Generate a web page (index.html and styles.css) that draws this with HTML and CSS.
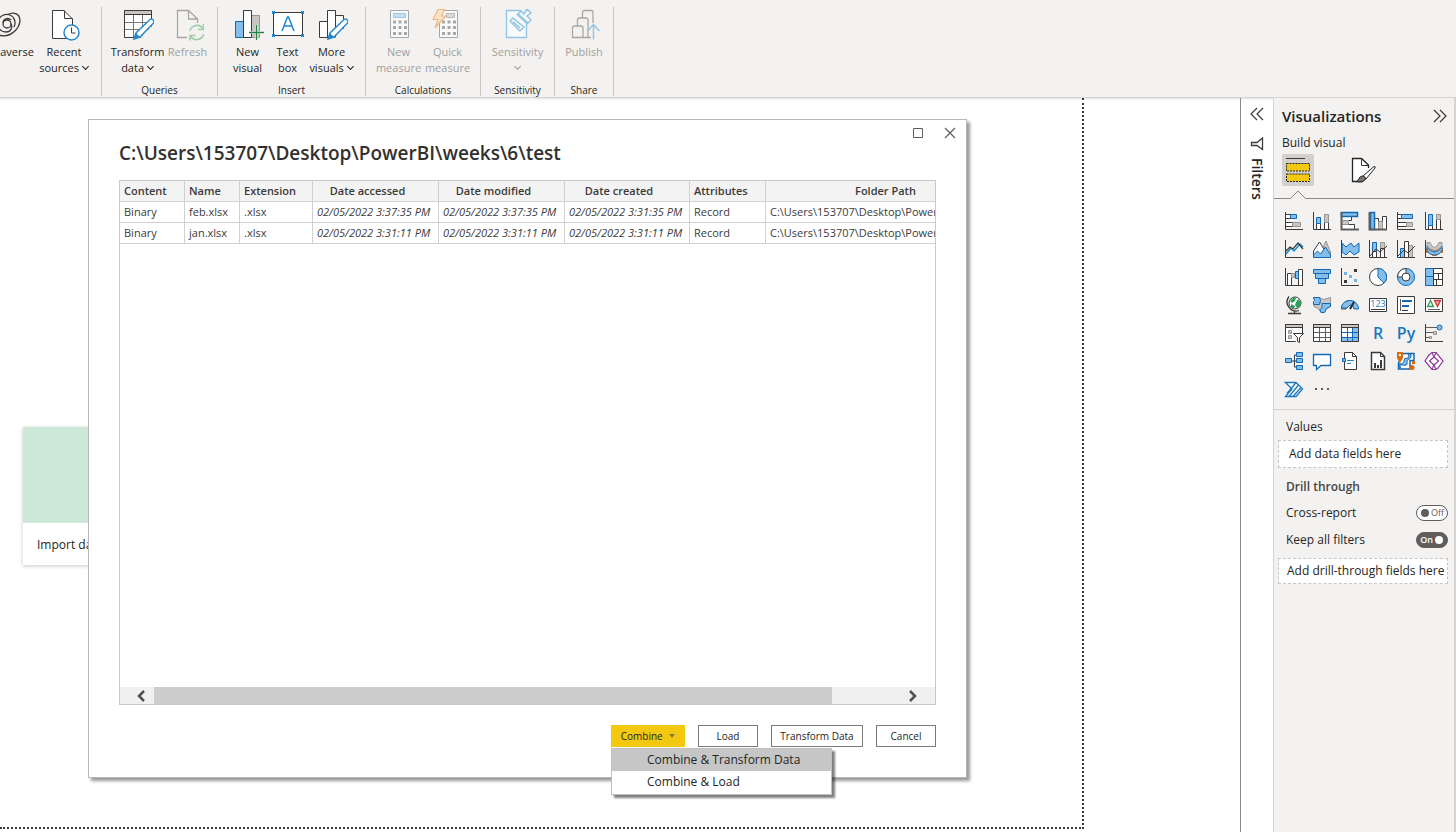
FILE: index.html
```html
<!DOCTYPE html>
<html lang="en">
<head>
<meta charset="utf-8">
<title>Power BI Desktop</title>
<link rel="stylesheet" href="styles.css">
</head>
<body>
<header class="ribbon">
  <section class="group group-data">
    <div class="tools">
      <button class="tool tool-wide"><svg width="32" height="32" viewBox="0 0 32 32"><g fill="none" stroke="#3b3a39" stroke-width="1.300"><circle cx="15" cy="15" r="4"/><path d="M19 15c2 3 0 8-5 8-6 0-9-5-8-10 1-6 7-9 12-7 5 2 6 8 4 12"/><path d="M16 5.500c3-2 8-2 10.500 1 3 4 1 11-3 15-4 4-10 6-15 5-5-2-6-9-3-14"/><path d="M11 14c0-4 5-6 8-3"/></g></svg><span>Dataverse</span></button>
      <button class="tool tool-wide"><svg width="32" height="32" viewBox="0 0 32 32"><path class="w" d="M4.500 1.500H16L24.500 10V29.500H4.500Z"/><path class="k" d="M16.500 1.500V9.500H24.500"/><circle cx="23.500" cy="23.500" r="7.500" fill="#fff" stroke="#2b88c8" stroke-width="1.500"/><path class="k" d="M23.500 18.500V24H27.500"/></svg><span>Recent<br>sources <i class="chev"></i></span></button>
    </div>
  </section>
  <section class="group group-queries">
    <div class="tools">
      <button class="tool tool-wide"><svg width="32" height="32" viewBox="0 0 32 32"><path class="w" d="M2.500 1.500H29.500V28.500H2.500Z"/><path fill="#c8c6c4" stroke="#3b3a39" d="M2.500 1.500H29.500V5.500H2.500Z"/><path fill="none" stroke="#797775" d="M3 13.500H29M3 20.500H29M11.500 6V28M20.500 6V28"/><path d="M18 29.500L30 17V29.500Z" fill="#f3f2f1"/><path d="M12 30l2-6L28 10.500c2-1.500 5 1 3.500 3.500L18 28Z" fill="#fff" stroke="#2b88c8" stroke-width="1.500"/><path d="M12 30l2-6 4 4Z" fill="#2b88c8"/></svg><span>Transform<br>data <i class="chev"></i></span></button>
      <button class="tool tool-mid" disabled><svg width="32" height="32" viewBox="0 0 32 32"><path fill="none" stroke="#a9a7a5" stroke-width="1.300" d="M15 28.500H5.500V1.500H16.500L25.500 10V14M16.500 1.500V10H25.500"/><path fill="none" stroke="#a0cda9" stroke-width="1.600" d="M18 22a7 7 0 0 1 13-2M31.500 15v5.500H26M31.500 25a7 7 0 0 1-13 2M18 31.500V26.500H23.500"/></svg><span>Refresh</span></button>
    </div>
    <h2>Queries</h2>
  </section>
  <section class="group group-insert">
    <div class="tools">
      <button class="tool tool-small"><svg width="32" height="32" viewBox="0 0 32 32"><path fill="#83beec" stroke="#1268b3" d="M3.500 12.500H11.500V28.500H3.500Z"/><path fill="#c8c6c4" stroke="#979593" d="M19.500 6.500H27.500V28.500H19.500Z"/><path class="w" d="M11.500 1.500H19.500V28.500H11.500Z"/><path d="M24.500 16V31M17 23.500H32" stroke="#fff" stroke-width="3" opacity=".6"/><path d="M24.500 16V31M17 23.500H32" stroke="#1f8546" stroke-width="1.300"/></svg><span>New<br>visual</span></button>
      <button class="tool tool-mid"><svg width="32" height="32" viewBox="0 0 32 32"><path class="w" d="M1.500 3.500H30.500V26.500H1.500Z"/><path fill="#1b88d3" d="M0 2h3v3H0zM29 2h3v3H29zM0 25h3v3H0zM29 25h3v3H29z"/><path d="M10 22L15.500 8H16.500L22 22M12 17H20" fill="none" stroke="#1b88d3" stroke-width="1.500"/></svg><span>Text<br>box</span></button>
      <button class="tool tool-mid"><svg width="32" height="32" viewBox="0 0 32 32"><path class="w" d="M3.500 12.500H11.500V28.500H3.500ZM19.500 6.500H27.500V28.500H19.500ZM11.500 1.500H19.500V28.500H11.500Z"/><path d="M18 30L30 17V30Z" fill="#f3f2f1"/><path d="M12 30l2-6L28 10.500c2-1.500 5 1 3.500 3.500L18 28Z" fill="#fff" stroke="#2b88c8" stroke-width="1.500"/><path d="M12 30l2-6 4 4Z" fill="#2b88c8"/></svg><span>More<br>visuals <i class="chev"></i></span></button>
    </div>
    <h2>Insert</h2>
  </section>
  <section class="group group-calc">
    <div class="tools">
      <button class="tool tool-mid tool-calc" disabled><svg width="32" height="32" viewBox="0 0 32 32"><path fill="#fafafa" stroke="#a9a7a5" d="M7.500 1.500H25.500V28.500H7.500Z"/><path fill="#c4dff2" stroke="#9cc6e4" d="M10.500 4.500H22.500V8.500H10.500Z"/><path fill="none" stroke="#a9a7a5" stroke-width="3" stroke-dasharray="3 2.500" d="M10 13H24M10 18.500H24M10 24.500H24"/></svg><span>New<br>measure</span></button>
      <button class="tool tool-mid tool-calc" disabled><svg width="32" height="32" viewBox="0 0 32 32"><path fill="#fafafa" stroke="#a9a7a5" d="M7.500 1.500H25.500V28.500H7.500Z"/><path fill="#ddd" stroke="#b9b7b5" d="M14.500 4.500H22.500V8.500H14.500Z"/><path fill="none" stroke="#a9a7a5" stroke-width="3" stroke-dasharray="3 2.500" d="M10 13H24M10 18.500H24M10 24.500H24"/><path fill="#fbe3c3" stroke="#eeb981" stroke-width="1.200" d="M6 .5H12.500L9.500 7H13.500L3 19 6 10.500H1Z"/></svg><span>Quick<br>measure</span></button>
    </div>
    <h2>Calculations</h2>
  </section>
  <section class="group group-sens">
    <div class="tools">
      <button class="tool tool-wide" disabled><svg width="32" height="32" viewBox="0 0 32 32"><path fill="#f8fafc" stroke="#92c5e4" stroke-width="1.300" d="M19 1.500H4.500V28.500H24.500V14"/><path fill="#f3f8fc" stroke="#92c5e4" stroke-width="1.500" d="M8 12l3-3 11 9-4 4ZM11 12.500l7 6.500M16 5l3-3 3 3 3-5 4 4-4 3 4 4-3 3Z"/><path stroke="#92c5e4" stroke-width="2" d="M15 5l11 10"/></svg><span>Sensitivity<br><i class="chev"></i></span></button>
    </div>
    <h2>Sensitivity</h2>
  </section>
  <section class="group group-share">
    <div class="tools">
      <button class="tool tool-mid" disabled><svg width="32" height="32" viewBox="0 0 32 32"><g fill="none" stroke="#a9a7a5" stroke-width="1.300"><path d="M4.500 28.500V19q0-2 2-2H13q2 0 2 2V28.500Z"/><path d="M9.500 17V11q0-2 2-2H18q2 0 2 2V28.500H15"/><path d="M14.500 9V3.500q0-2 2-2H23q2 0 2 2V14M20 28.500H23"/></g><path d="M25.500 30.500V16M19.500 22l6-6.500 6 6.500" fill="none" stroke="#92c5e4" stroke-width="1.500"/></svg><span>Publish</span></button>
    </div>
    <h2>Share</h2>
  </section>
</header>

<main class="workspace">
  <div class="canvas">
    <div class="page">
      <a class="card" href="#import"><span class="card-art"></span><span class="card-text">Import data from Excel</span></a>
    </div>
  </div>

  <aside class="filters">
    <button class="plain" aria-label="Expand filters"><svg width="16" height="16" viewBox="0 0 16 16"><path class="k" stroke-width="1.200" d="M8 2L2 8l6 6M14 2L8 8l6 6"/></svg></button>
    <svg width="14" height="14" viewBox="0 0 14 14"><path class="k" stroke-width="1.300" d="M12.500 1V12.500L7 8.500H1.500V5.500H7Z"/></svg>
    <h2>Filters</h2>
  </aside>

  <aside class="viz">
    <div class="viz-head"><h2>Visualizations</h2><button class="plain" aria-label="Collapse"><svg width="16" height="16" viewBox="0 0 16 16"><path class="k" stroke-width="1.200" d="M2 2l6 6-6 6M8 2l6 6-6 6"/></svg></button></div>
    <h3>Build visual</h3>
    <div class="modes">
      <button class="mode mode-on" aria-label="Build visual"><svg width="32" height="32" viewBox="0 0 32 32"><path class="k" d="M4 4.500H23"/><path fill="#f2c811" stroke="#252423" stroke-dasharray="2 1" d="M4.500 9.500H27.500V17H4.500ZM4.500 20H27.500V27.500H4.500Z"/></svg></button>
      <button class="mode" aria-label="Format visual"><svg width="32" height="32" viewBox="0 0 32 32"><path d="M16 27.500H5.500V4.500H14.500L21.500 11V14" fill="#fff" stroke="#252423" stroke-width="1.300"/><path class="k" d="M14.500 4.500V11.500H21.500"/><path fill="#fff" stroke="#252423" d="M16 22L27 12.500q2 0 1 1.500L19 25Z"/><path fill="#797775" stroke="#252423" d="M9 27.500c3 0 2-5 6.500-5.500 3 0 4 3 2 4.500-3 2-6 1.500-8.500 1Z"/></svg></button>
    </div>
    <svg class="notch" width="20" height="9" viewBox="0 0 20 9"><path d="M0 9V8.500H2.500L10 1l7.500 7.500H20V9Z" fill="#f3f2f1"/><path d="M0 8.500H2.500L10 1l7.500 7.500H20" fill="none" stroke="#8a8886"/></svg>

    <div class="gallery">
      <button aria-label="Stacked bar chart"><svg viewBox="0 0 20 20"><path class="w" d="M1.500 3.500h6v4h-6zM1.500 11.500h8v4h-8z"/><path class="b" d="M6.500 3.500h6v4h-6z"/><path class="g" d="M8.500 11.500h8v4h-8z"/><path class="k" d="M1.500 1V18.500H19"/></svg></button>
      <button aria-label="Stacked column chart"><svg viewBox="0 0 20 20"><path class="w" d="M4.500 12.500h4v6h-4zM12.500 11.500h4v7h-4z"/><path class="b" d="M4.500 6.500h4v6h-4z"/><path class="g" d="M12.500 3.500h4v8h-4z"/><path class="k" d="M1.500 1V18.500H19"/></svg></button>
      <button aria-label="Clustered bar chart"><svg viewBox="0 0 20 20"><path class="w" d="M1.500 5.500h10v4h-10zM1.500 13.500h13v5h-13z"/><path class="g" d="M1.500 9.500h7v4h-7z"/><path class="b" stroke-width="1.500" d="M1.500 1.500h16v4h-16z"/><path fill="none" stroke="#605e5c" stroke-width="2" d="M1.500 1V18.500H19"/></svg></button>
      <button aria-label="Clustered column chart"><svg viewBox="0 0 20 20"><path class="w" d="M6.500 7.500h4v11h-4zM14.500 5.500h4v13h-4z"/><path class="g" d="M10.500 10.500h4v8h-4z"/><path class="b" stroke-width="1.500" d="M2.500 1.500h4v17h-4z"/><path fill="none" stroke="#605e5c" stroke-width="2" d="M1.500 1V18.500H19"/></svg></button>
      <button aria-label="100% stacked bar chart"><svg viewBox="0 0 20 20"><path class="w" d="M1.500 3.500h4v4h-4zM1.500 11.500h9v4h-9z"/><path class="b" d="M5.500 3.500h11v4h-11z"/><path class="g" d="M10.500 11.500h6v4h-6z"/><path class="k" d="M1.500 1V18.500H19"/></svg></button>
      <button aria-label="100% stacked column chart"><svg viewBox="0 0 20 20"><path class="w" d="M4.500 14.500h4v4h-4zM12.500 8.500h4v10h-4z"/><path class="b" d="M4.500 3.500h4v11h-4z"/><path class="g" d="M12.500 3.500h4v5h-4z"/><path class="k" d="M1.500 1V18.500H19"/></svg></button>

      <button aria-label="Line chart"><svg viewBox="0 0 20 20"><path d="M2 15l5-6 3 3 6-7 3 3" fill="none" stroke="#1b88d3" stroke-width="1.500"/><path class="k" stroke-width="1.300" d="M2 12l4-4 3 2 5-6 5 6"/><path class="k" d="M1.500 1V18.500H19"/></svg></button>
      <button aria-label="Area chart"><svg viewBox="0 0 20 20"><path class="g" d="M9 13l5-11 4.500 11V18H9Z"/><path class="w" d="M1.500 12L7.500 3l5 8-4 7h-7Z"/><path class="b" d="M1.500 18.500V16l4-4 3 3 5-7 5 8V18.500Z"/></svg></button>
      <button aria-label="Stacked area chart"><svg viewBox="0 0 20 20"><path class="b" d="M2 4l4 4 5-4 3 4 5-4v9l-5 3-4-4-4 4-4-3Z"/><path class="k" d="M1.500 1V18.500H19"/></svg></button>
      <button aria-label="Line and stacked column chart"><svg viewBox="0 0 20 20"><path class="b" d="M4.500 3.500h4v9h-4z"/><path class="g" d="M12.500 3.500h4v6h-4z"/><path class="w" d="M4.500 12.500h4v6h-4zM12.500 9.500h4v9h-4z"/><path class="k" d="M1.500 1V18.500H19M2 17l6-7 4 3 7-6"/></svg></button>
      <button aria-label="Line and clustered column chart"><svg viewBox="0 0 20 20"><path class="b" d="M4.500 9.500h4v9h-4z"/><path class="g" d="M12.500 6.500h4v12h-4z"/><path class="w" d="M8.500 2.500h4v16h-4z"/><path class="k" d="M1.500 1V18.500H19M2 17l6-6 4 3 7-7"/></svg></button>
      <button aria-label="Ribbon chart"><svg viewBox="0 0 20 20"><path fill="#f0a04b" stroke="#d86b0f" d="M2.500 9.500h4l4 3 4-3h4v4h-3l-3 3h-4l-3-3h-3Z"/><path class="b" d="M3 7q3 6 7.500 6T18 7v4q-2 5-7.500 5T3 11Z"/><path class="g" d="M3 3.500h3q2 5 4.500 5t4.500-5h3v3q-3 5-7.500 5T3 6.500Z"/><path class="k" d="M1.500 1V18.500H19"/></svg></button>

      <button aria-label="Waterfall chart"><svg viewBox="0 0 20 20"><path class="w" d="M3.500 6.500h4v12h-4zM14.500 2.500h4v16h-4z"/><path class="g" d="M7.500 6.500h3v4h-3z"/><path class="b" d="M11.500 4.500h3v7h-3z"/><path class="k" d="M1.500 1V18.500H19"/></svg></button>
      <button aria-label="Funnel chart"><svg viewBox="0 0 20 20"><path class="b" d="M1.500 2.500h17v4h-17zM3.500 6.500h13v5h-13zM6.500 11.500h7v5h-7z"/></svg></button>
      <button aria-label="Scatter chart"><svg viewBox="0 0 20 20"><path class="k" d="M1.500 1V18.500H19"/><path fill="#3b3a39" d="M14 2h3v3h-3zM4 13h3v3H4z"/><path fill="#6fb3ea" d="M4 5h3v3H4zM9 8h3v3H9zM14 12h3v3h-3z"/></svg></button>
      <button aria-label="Pie chart"><svg viewBox="0 0 20 20"><circle class="w" cx="10" cy="10" r="8.500"/><path class="b" d="M10 1.500A8.500 8.500 0 0 1 16 16L10 10Z"/></svg></button>
      <button aria-label="Donut chart"><svg viewBox="0 0 20 20"><circle class="b" cx="10" cy="10" r="8.500"/><path class="w" d="M10 1.500A8.500 8.500 0 0 0 1.500 10H10Z"/><circle class="w" cx="10" cy="10" r="4"/></svg></button>
      <button aria-label="Treemap"><svg viewBox="0 0 20 20"><path class="w" d="M1.500 1.500h17v17h-17z"/><path class="b" d="M1.500 1.500h8v8h-8zM1.500 9.500h8v9h-8z"/><path class="k" d="M9.500 6.500h9M14.500 6.500v6M9.500 12.500h9M12.500 12.500v6M9.500 1.500v17"/></svg></button>

      <button aria-label="Map"><svg viewBox="0 0 20 20"><circle class="w" cx="11" cy="8" r="6"/><path fill="#2e9e5b" d="M6 6l4-4 2 1-1 3-3 2zM14 4l3 3-1 5-3 1-2-3 1-3zM7 9l4 2-1 3-3-2z"/><path class="k" stroke-width="1.300" d="M5 1.500a9 9 0 0 0 10 14M10.500 16.500v2M4 18.500h13"/></svg></button>
      <button aria-label="Filled map"><svg viewBox="0 0 20 20"><path class="g" d="M1.500 2.500h6l4 2 7-2v9l-4 2-2 4H9l-3-4-4-2v-4l1-2Z"/><path class="b" d="M1.500 2.500h6l1 3-1 4h-6v-3l1-1ZM10 8.500h8.500v3l-4 2-2 4H9l-1-3 2-2Z"/></svg></button>
      <button aria-label="Gauge"><svg viewBox="0 0 20 20"><path class="w" d="M1.500 14A8.500 8.500 0 0 1 10 5.500V10a4 4 0 0 0-4 4Z"/><path class="b" d="M7 6a8.500 8.500 0 0 1 11.500 8H14a4 4 0 0 0-4-4L7 13H1.500A8 8 0 0 1 7 6Z"/><path d="M10 14l4-7" stroke="#252423" stroke-width="2"/></svg></button>
      <button aria-label="Card"><svg viewBox="0 0 20 20"><path class="w" d="M1.500 3.500h17v13h-17z"/><path class="k" d="M3 14.500h14"/><text x="10" y="12" text-anchor="middle" font-size="9" fill="#1b78c0">123</text></svg></button>
      <button aria-label="Multi-row card"><svg viewBox="0 0 20 20"><path class="w" d="M1.500 1.500h17v17h-17z"/><path stroke="#605e5c" d="M4.500 4v12"/><path stroke="#1268b3" stroke-width="2" d="M6 6h10M6 11h7"/><path class="k" d="M6 15.500h6"/></svg></button>
      <button aria-label="KPI"><svg viewBox="0 0 20 20"><path class="w" d="M1.500 3.500h17v13h-17z"/><path fill="#e3f3e8" stroke="#2e9e5b" stroke-width="1.300" d="M3.500 11.500l3-6 3 6Z"/><path fill="#f3a3a3" stroke="#d13438" stroke-width="1.300" d="M10.500 5.500h6l-3 6Z"/><path stroke="#605e5c" d="M4 14.500h12"/></svg></button>

      <button aria-label="Slicer"><svg viewBox="0 0 20 20"><path class="w" d="M1.500 1.500h17v17h-17z"/><path d="M12 19l-3-6V11h11v8Z" fill="#f3f2f1"/><path fill="#c8c6c4" stroke="#3b3a39" d="M1.500 1.500h17v3h-17z"/><path class="g" d="M4.500 7.500h3v3h-3zM4.500 12.500h3v3h-3z"/><path class="w" d="M9.500 10.500h10l-4 4v5l-2-1v-4Z"/></svg></button>
      <button aria-label="Table"><svg viewBox="0 0 20 20"><path class="w" d="M1.500 1.500h17v17h-17z"/><path fill="#c8c6c4" stroke="#3b3a39" d="M1.500 1.500h17v3h-17z"/><path stroke="#605e5c" d="M2 9.500h16M2 14.500h16M7.500 5v13M13.500 5v13"/></svg></button>
      <button aria-label="Matrix"><svg viewBox="0 0 20 20"><path class="w" d="M1.500 1.500h17v17h-17z"/><path fill="#83beec" d="M13 5h5v13H2v-4h11z"/><path stroke="#1268b3" d="M2 9.500h16M2 14.500h16M7.500 5v13M12.500 5v13"/><path fill="none" stroke="#3b3a39" d="M1.500 1.500h17v17h-17z"/><path fill="#c8c6c4" stroke="#3b3a39" d="M1.500 1.500h17v3h-17z"/></svg></button>
      <button class="glyph">R</button>
      <button class="glyph">Py</button>
      <button aria-label="Key influencers"><svg viewBox="0 0 20 20"><path class="k" d="M1.500 1V18.500H19"/><path stroke="#605e5c" d="M2 4.500h11M2 9.500h8M2 14.500h4"/><circle class="b" cx="15.500" cy="4.500" r="2.500"/><path class="g" d="M9.500 8.500h3v3h-3zM5.500 13.500h2v2h-2z"/></svg></button>

      <button aria-label="Decomposition tree"><svg viewBox="0 0 20 20"><path class="k" d="M7 10h6M13 4H10.500V16H13"/><path class="b" d="M1.500 7.500h6v4h-6zM12.500 1.500h6v4h-6zM12.500 7.500h6v4h-6zM12.500 14.500h6v4h-6z"/></svg></button>
      <button aria-label="Q&amp;A"><svg viewBox="0 0 20 20"><path fill="#fff" stroke="#1268b3" stroke-width="1.300" d="M1.500 3.500h17v11H9l-4.500 4v-4h-3Z"/></svg></button>
      <button aria-label="Smart narrative"><svg viewBox="0 0 20 20"><path class="w" d="M4.500 1.500h8l4 4v13h-12Z"/><path class="k" d="M12.500 1.500v4h4"/><path class="b" d="M2.500 7.500h3v3h-3z"/><path stroke="#1b88d3" d="M7 9.500h7M7 12.500h4"/></svg></button>
      <button aria-label="Paginated report"><svg viewBox="0 0 20 20"><path class="w" stroke-width="1.500" d="M3.500 1.500h9l4 4v13h-13Z"/><path class="k" d="M12.500 1.500v4h4"/><path fill="#3b3a39" d="M6 12h2v5H6zM9 14h2v3H9zM12 9h2v8h-2z"/></svg></button>
      <button aria-label="ArcGIS Maps"><svg viewBox="0 0 20 20"><path fill="#fff" stroke="#1268b3" stroke-width="1.500" d="M7 2.500h11v7H14V18H2.500v-6Z"/><path fill="#83beec" stroke="#1268b3" d="M15 3q1 4-2 5t-2 4-4 2-2 3H3v-4q5 0 5-3t3-3 1-4Z"/><path fill="#d86b0f" d="M1 1h6v6l-3 5-3-5zM16 10h3v3h-3z"/><circle cx="4" cy="4" r="1.200" fill="#fff"/><circle cx="16" cy="16.500" r="2.500" fill="#d86b0f"/></svg></button>
      <button aria-label="Power Apps"><svg viewBox="0 0 20 20"><g fill="#fff" stroke="#8e3b9b" stroke-width="1.200"><path d="M5 4l3-2.500h4L19 10l-5 7-2 1.500H8L1 10Z"/><path fill="none" d="M8 1.500L10 6 5.500 10 10 14 8 18.500M12 1.500L10 6l4.500 4L10 14l2 4.500"/></g></svg></button>

      <button aria-label="Power Automate"><svg viewBox="0 0 20 20"><path fill="#fff" stroke="#1b78c0" stroke-width="1.300" d="M1.500 3.500H12L18.500 10 12 17.500H1.500L8 10Z"/><path fill="none" stroke="#1b78c0" stroke-width="1.300" d="M12 3.500L3 14.500M14.500 6L5 17.500M17 8.500L9 17.500"/></svg></button>
      <button aria-label="Get more visuals"><svg viewBox="0 0 20 20"><path fill="#605e5c" d="M3 9h2v2H3zM9 9h2v2H9zM15 9h2v2h-2z"/></svg></button>
    </div>

    <div class="wells">
      <h4>Values</h4>
      <div class="well">Add data fields here</div>
      <h4 class="strong">Drill through</h4>
      <div class="row"><span id="cross">Cross-report</span><label class="switch"><input type="checkbox" aria-labelledby="cross">Off</label></div>
      <div class="row"><span id="keep">Keep all filters</span><label class="switch switch-on"><input type="checkbox" aria-labelledby="keep" checked>On</label></div>
      <div class="well well-drill">Add drill-through fields here</div>
    </div>
  </aside>
</main>

<div class="dialog" role="dialog" aria-labelledby="path">
  <div class="dialog-head">
    <h1 id="path">C:\Users\153707\Desktop\PowerBI\weeks\6\test</h1>
    <div class="controls">
      <button class="plain" aria-label="Maximize"><svg width="12" height="12" viewBox="0 0 12 12"><path d="M1.500 1.500h9v9h-9z" fill="none" stroke="#605e5c"/></svg></button>
      <button class="plain" aria-label="Close"><svg width="12" height="12" viewBox="0 0 12 12"><path d="M1 1l10 10M11 1L1 11" fill="none" stroke="#605e5c" stroke-width="1.200"/></svg></button>
    </div>
  </div>
  <div class="frame">
    <div class="scroller">
      <table>
        <colgroup><col class="c65"><col class="c55"><col class="c73"><col class="c126"><col class="c126"><col class="c125"><col class="c76"><col class="c256"></colgroup>
        <thead><tr><th>Content</th><th>Name</th><th>Extension</th><th class="mid">Date accessed</th><th class="mid">Date modified</th><th class="mid">Date created</th><th>Attributes</th><th class="mid">Folder Path</th></tr></thead>
        <tbody>
          <tr><td>Binary</td><td>feb.xlsx</td><td>.xlsx</td><td class="date">02/05/2022 3:37:35 PM</td><td class="date">02/05/2022 3:37:35 PM</td><td class="date">02/05/2022 3:31:35 PM</td><td>Record</td><td>C:\Users\153707\Desktop\PowerBI\weeks\6\test\</td></tr>
          <tr><td>Binary</td><td>jan.xlsx</td><td>.xlsx</td><td class="date">02/05/2022 3:31:11 PM</td><td class="date">02/05/2022 3:31:11 PM</td><td class="date">02/05/2022 3:31:11 PM</td><td>Record</td><td>C:\Users\153707\Desktop\PowerBI\weeks\6\test\</td></tr>
        </tbody>
      </table>
    </div>
    <div class="scrollbar">
      <button class="plain" aria-label="Scroll left"><svg width="10" height="12" viewBox="0 0 10 12"><path d="M8 1L3 6l5 5" fill="none" stroke="#505050" stroke-width="2.500"/></svg></button>
      <div class="track"><div class="thumb"></div></div>
      <button class="plain" aria-label="Scroll right"><svg width="10" height="12" viewBox="0 0 10 12"><path d="M2 1l5 5-5 5" fill="none" stroke="#505050" stroke-width="2.500"/></svg></button>
    </div>
  </div>
  <div class="actions">
    <div class="combine">
      <button class="btn btn-primary">Combine <i class="caret"></i></button>
      <div class="menu" role="menu">
        <button role="menuitem" class="item item-on">Combine &amp; Transform Data</button>
        <button role="menuitem" class="item">Combine &amp; Load</button>
      </div>
    </div>
    <button class="btn">Load</button>
    <button class="btn btn-wide">Transform Data</button>
    <button class="btn">Cancel</button>
  </div>
</div>
</body>
</html>
```
FILE: styles.css
```css
* { box-sizing: border-box; }
body {
  margin: 0;
  height: 100vh;
  display: flex;
  flex-direction: column;
  overflow: hidden;
  position: relative;
  background: #fff;
  color: #252423;
  font: 12px/16px "Open Sans", "Noto Sans", sans-serif;
}
h1, h2, h3, h4 { margin: 0; font-weight: 400; font-size: 12px; }
button { font: inherit; color: inherit; border: 0; padding: 0; background: none; }
svg { display: block; flex: none; }
.k { fill: none; stroke: #3b3a39; }
.w { fill: #fff; stroke: #3b3a39; }
.b { fill: #83beec; stroke: #1268b3; }
.g { fill: #c8c6c4; stroke: #979593; }
.plain { display: flex; align-items: center; justify-content: center; }

/* Ribbon */
.ribbon {
  flex: none;
  display: flex;
  padding: 7px 0 1px;
  background: #f3f2f1;
  border-bottom: 1px solid #d6d4d2;
  box-shadow: 0 1px 2px #0000001f;
}
.group {
  flex: none;
  display: flex;
  flex-direction: column;
  justify-content: space-between;
  align-items: center;
  height: 89px;
  border-right: 1px solid #c8c6c4;
}
.group h2 { font-size: 10px; line-height: 12px; }
.group-data { width: 102px; align-items: flex-end; padding-right: 9px; }
.group-queries { width: 116px; }
.group-insert { width: 148px; }
.group-calc { width: 115px; }
.group-sens { width: 74px; }
.group-share { width: 59px; }
.tools { display: flex; font-size: 11px; }
.tool {
  display: flex;
  flex-direction: column;
  align-items: center;
  gap: 3px;
  padding-top: 2px;
  white-space: nowrap;
}
.tool:disabled { color: #a19f9d; }
.tool > span { text-align: center; }
.tool-wide { width: 56px; }
.tool-mid { width: 44px; }
.tool-small { width: 36px; }
.tool-calc { width: 49px; }
.chev {
  display: inline-block;
  width: 5px;
  height: 5px;
  margin: 0 1px 3px;
  border: solid currentColor;
  border-width: 0 1px 1px 0;
  transform: rotate(45deg);
}

/* Workspace */
.workspace { flex: 1; display: flex; min-height: 0; }
.canvas { flex: 1; display: flex; padding: 0 156px 3px 0; min-width: 0; }
.page {
  flex: 1;
  padding: 329px 0 0 23px;
  border: dotted #3b3a39;
  border-width: 0 2px 2px 0;
}
.card {
  display: flex;
  flex-direction: column;
  width: 168px;
  color: #252423;
  text-decoration: none;
  box-shadow: 0 1px 4px #00000038;
}
.card-art { height: 96px; background: #cce9d8; }
.card-text { padding: 14px 14px 12px; line-height: 16px; font-weight: 500; white-space: nowrap; overflow: hidden; }

.filters {
  flex: none;
  width: 33px;
  display: flex;
  flex-direction: column;
  align-items: center;
  gap: 15px;
  padding-top: 8px;
  border-left: 1px solid #8a8886;
}
.filters h2 { writing-mode: vertical-rl; font-size: 14px; font-weight: 600; line-height: 16px; margin-top: -8px; }

.viz {
  flex: none;
  display: flex;
  flex-direction: column;
  width: 183px;
  background: #f3f2f1;
  border: solid #d6d4d2;
  border-width: 0 2px 0 1px;
}
.viz-head { display: flex; justify-content: space-between; align-items: center; padding: 8px 6px 0 8px; }
.viz-head h2 { font-size: 15px; line-height: 20px; font-weight: 600; }
.viz h3 { padding: 9px 8px 0; font-weight: 500; }
.modes { display: flex; gap: 33px; padding: 3px 8px 0; }
.mode { width: 32px; height: 32px; border-radius: 2px; }
.mode-on { background: #d2d0ce; }
.notch { margin: 4px 0 -1px 14px; position: relative; }
.gallery {
  display: grid;
  grid-template-columns: repeat(6, 28px);
  grid-auto-rows: 28px;
  padding: 8px 6px 6px;
  border-top: 1px solid #8a8886;
  border-bottom: 1px solid #d6d4d2;
}
.gallery button { display: flex; align-items: center; justify-content: center; }
.gallery svg { width: 20px; height: 20px; }
.gallery .glyph { color: #1b78c0; font-size: 16px; font-weight: 600; }
.wells { padding: 9px 6px 0 4px; }
.wells h4 { padding: 0 8px; }
.wells .strong { margin: 11px 0 4px; color: #484644; font-weight: 600; }
.well {
  margin-top: 5px;
  padding: 5px 10px;
  background: #fff;
  border: 1px dashed #c8c6c4;
  white-space: nowrap;
}
.well-drill { padding: 4px 8px; }
.row { display: flex; justify-content: space-between; align-items: center; height: 27px; padding-left: 8px; }
.switch {
  display: flex;
  align-items: center;
  gap: 2px;
  height: 16px;
  width: 32px;
  padding: 0 4px;
  border: 1px solid #605e5c;
  border-radius: 8px;
  background: #fff;
  color: #605e5c;
  font-size: 9px;
}
.switch input { appearance: none; flex: none; margin: 0; width: 8px; height: 8px; border-radius: 50%; background: #605e5c; }
.switch-on { flex-direction: row-reverse; background: #605e5c; color: #fff; font-weight: 600; }
.switch-on input { background: #fff; }

/* Dialog */
.dialog {
  position: absolute;
  left: 88px;
  right: 489px;
  top: 119px;
  bottom: 54px;
  display: flex;
  flex-direction: column;
  padding: 0 30px;
  background: #fff;
  border: 1px solid #b8b8b8;
  box-shadow: 3px 3px 3px #00000066;
}
.dialog-head { display: flex; justify-content: space-between; align-items: flex-start; padding-bottom: 15px; }
h1 { padding-top: 21px; font-size: 19px; line-height: 24px; font-weight: 600; color: #323130; }
.controls { display: flex; gap: 20px; margin: 7px -20px 0 0; }
.frame { flex: 1; display: flex; flex-direction: column; min-height: 0; border: 1px solid #c8c8c8; }
.scroller { flex: 1; overflow: hidden; }
table { table-layout: fixed; width: 902px; border-collapse: separate; border-spacing: 0; font-size: 11px; line-height: 16px; color: #3b3a39; }
.c65 { width: 65px; } .c55 { width: 55px; } .c73 { width: 73px; } .c76 { width: 76px; }
.c125 { width: 125px; } .c126 { width: 126px; } .c256 { width: 256px; }
th, td {
  height: 21px;
  padding: 0 4px;
  border: solid #d0d0d0;
  border-width: 0 1px 1px 0;
  text-align: left;
  white-space: nowrap;
  overflow: hidden;
}
th { background: #f3f3f3; font-weight: 600; }
th.mid { text-align: center; padding-right: 20px; }
.date { font-style: italic; }
.scrollbar { display: flex; height: 17px; background: #f0f0f0; }
.scrollbar button { width: 44px; }
.scrollbar button:first-child { width: 34px; padding-left: 8px; }
.track { flex: 1; }
.thumb { width: 92%; height: 100%; background: #cdcdcd; }

.actions { display: flex; justify-content: flex-end; gap: 13px; padding: 20px 0 30px; font-size: 10px; }
.btn { display: block; width: 60px; height: 22px; border: 1px solid #7a7a7a; background: #fff; white-space: nowrap; }
.btn-wide { width: 92px; }
.btn-primary { width: 74px; background: #f2c811; border-color: #f2c811; }
.caret {
  display: inline-block;
  margin: 0 0 2px 4px;
  border: solid transparent;
  border-width: 4px 3px 0;
  border-top-color: #8a7a3a;
}
.combine { position: relative; }
.menu {
  position: absolute;
  left: 0;
  top: 23px;
  width: 221px;
  padding: 0 0 1px;
  background: #fff;
  border: 1px solid #c0c0c0;
  box-shadow: 3px 3px 2px #00000080;
}
.item { display: block; width: 100%; height: 22px; padding-left: 35px; text-align: left; font-size: 12px; }
.item-on { background: #c6c6c6; }
```
